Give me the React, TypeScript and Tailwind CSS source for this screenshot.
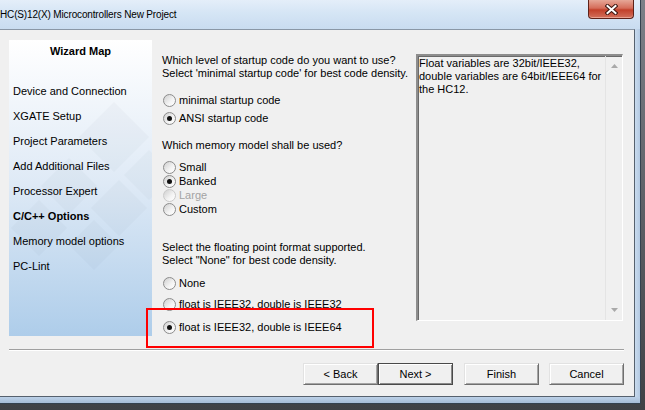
import React from "react"

const sans = "font-['Liberation_Sans',Arial,sans-serif]"

function Radio({ label, checked = false, disabled = false }: { label: string; checked?: boolean; disabled?: boolean }) {
  return (
    <div className={`flex items-center h-[14px] pl-[1px] whitespace-nowrap ${disabled ? "text-[#a3a3a3]" : "text-black"}`}>
      <span
        className={`w-[13px] h-[13px] shrink-0 rounded-full border flex items-center justify-center bg-[linear-gradient(135deg,#cfcfcf,#f4f4f4_60%,#ffffff)] ${
          disabled ? "border-[#cacaca]" : "border-[#8c8c8c]"
        }`}
      >
        {checked && <span className="w-[5px] h-[5px] rounded-full bg-[#111]" />}
      </span>
      <span className="ml-[3px]">{label}</span>
    </div>
  )
}

function Btn({ children, isDefault = false }: { children: React.ReactNode; isDefault?: boolean }) {
  return (
    <div
      className={`w-[75px] h-[22px] flex items-center justify-center bg-[#f0f0f0] text-black ${
        isDefault
          ? "border border-[#4a4a4a] shadow-[inset_1px_1px_0_#ffffff,inset_-1px_-1px_0_#8a8a8a]"
          : "border border-t-[#e2e2e2] border-l-[#e2e2e2] border-r-[#6f6f6f] border-b-[#6f6f6f] shadow-[inset_1px_1px_0_#ffffff,inset_-1px_-1px_0_#a5a5a5]"
      }`}
    >
      {children}
    </div>
  )
}

const mapItems = [
  "Device and Connection",
  "XGATE Setup",
  "Project Parameters",
  "Add Additional Files",
  "Processor Expert",
  "C/C++ Options",
  "Memory model options",
  "PC-Lint",
]

function WizardMap() {
  return (
    <div className="relative w-[143px] h-[296px] overflow-hidden bg-[linear-gradient(to_bottom,#ffffff,#dfeaf6_48%,#aecdea)]">
      {/* faint logo watermark */}
      <svg className="absolute inset-0" width="143" height="296" viewBox="0 0 143 296">
        <g fill="#5d7089" opacity="0.035">
          <path d="M105 62 L140 97 L105 132 L70 97 Z" />
          <path d="M140 110 L165 135 L140 160 L115 135 Z" />
          <path d="M60 118 L88 146 L60 174 L32 146 Z" />
          <path d="M110 140 L138 168 L110 196 L82 168 Z" />
          <path d="M30 160 L58 188 L30 216 L2 188 Z" />
          <path d="M85 180 L110 205 L85 230 L60 205 Z" />
        </g>
      </svg>
      <div className="relative">
        <div className="pt-[5px] h-[45px] text-center font-bold leading-[13px]">Wizard Map</div>
        <div className="pl-[4px]">
          {mapItems.map((it) => (
            <div key={it} className={`h-[25px] leading-[13px] whitespace-nowrap ${it === "C/C++ Options" ? "font-bold" : ""}`}>
              {it}
            </div>
          ))}
        </div>
      </div>
    </div>
  )
}

function Triangle({ up }: { up: boolean }) {
  return (
    <svg width="7" height="4" viewBox="0 0 7 4">
      <path d={up ? "M0 4 L3.5 0 L7 4 Z" : "M0 0 L3.5 4 L7 0 Z"} fill="#a9a9a9" />
    </svg>
  )
}

export default function App() {
  return (
    <div className={`relative w-[645px] h-[410px] overflow-hidden bg-[linear-gradient(to_bottom,#7c8088,#3f4246)] text-[11px] ${sans}`}>
      <div className="w-[641px] h-[404px] flex flex-col bg-[#b7cde6] border-r border-b border-[#34424f]">
        {/* title bar */}
        <div className="h-[29px] flex justify-between bg-[linear-gradient(to_bottom,#e4eef9,#d5e5f5_45%,#c9dcf0)]">
          <div className="h-full flex items-center text-[10px] tracking-[-0.15px] text-black whitespace-nowrap">
            HC(S)12(X) Microcontrollers New Project
          </div>
          <div className="w-[46px] h-[19px] mr-[6px] rounded-b-[4px] border border-t-0 border-[#5e2219] flex items-center justify-center bg-[linear-gradient(to_bottom,#e6a797,#d56d5a_45%,#c2402a_55%,#d2705c)] shadow-[inset_0_-1px_0_#e9a08f]">
            <svg width="13" height="11" viewBox="0 0 13 11">
              <path d="M2.5 2 L10.5 9 M10.5 2 L2.5 9" stroke="#3d1610" strokeWidth="4" strokeLinecap="square" />
              <path d="M2.5 2 L10.5 9 M10.5 2 L2.5 9" stroke="#ffffff" strokeWidth="2" strokeLinecap="square" />
            </svg>
          </div>
        </div>

        <div className="flex">
          {/* client area */}
          <div className="w-[635px] h-[368px] bg-[#f0f0f0] border-t border-r border-b border-t-[#8a97a6] border-r-[#56616e] border-b-[#56616e] pl-[9px] pr-[10px] pt-[10px] text-black">
            <div className="flex h-[296px]">
              <WizardMap />

              <div className="ml-[10px] w-[254px] whitespace-nowrap">
                <div className="mt-[14px] leading-[13px]">
                  Which level of startup code do you want to use?
                  <br />
                  Select 'minimal startup code' for best code density.
                </div>
                <div className="mt-[13px]">
                  <Radio label="minimal startup code" />
                </div>
                <div className="mt-[4px]">
                  <Radio label="ANSI startup code" checked />
                </div>

                <div className="mt-[14px] leading-[13px]">Which memory model shall be used?</div>
                <div className="mt-[8px]">
                  <Radio label="Small" />
                  <Radio label="Banked" checked />
                  <Radio label="Large" disabled />
                  <Radio label="Custom" />
                </div>

                <div className="mt-[25px] leading-[13px]">
                  Select the floating point format supported.
                  <br />
                  Select "None" for best code density.
                </div>
                <div className="mt-[9px]">
                  <Radio label="None" />
                </div>
                <div className="mt-[7px]">
                  <Radio label="float is IEEE32, double is IEEE32" />
                </div>
                <div className="mt-[9px]">
                  <Radio label="float is IEEE32, double is IEEE64" checked />
                </div>
              </div>

              {/* description box */}
              <div className="mt-[14px] w-[207px] h-[267px] flex border-t-2 border-l-2 border-t-[#8d8d8d] border-l-[#8d8d8d] border-r border-b border-r-white border-b-white shadow-[inset_1px_1px_0_#6a6a6a]">
                <div className="flex-1 pl-[1px] pt-[1px] leading-[13px] whitespace-nowrap">
                  Float variables are 32bit/IEEE32,
                  <br />
                  double variables are 64bit/IEEE64 for
                  <br />
                  the HC12.
                </div>
                <div className="w-[17px] border-l border-[#e4e4e4] flex flex-col items-center justify-between pt-[8px] pb-[8px]">
                  <Triangle up />
                  <Triangle up={false} />
                </div>
              </div>
            </div>

            <div className="mt-[13px] border-t border-b border-t-[#a0a0a0] border-b-white" />

            <div className="mt-[12px] flex justify-end">
              <Btn>&lt; Back</Btn>
              <Btn isDefault>Next &gt;</Btn>
              <div className="ml-[11px]">
                <Btn>Finish</Btn>
              </div>
              <div className="ml-[10px]">
                <Btn>Cancel</Btn>
              </div>
            </div>
          </div>
          <div className="flex-1 bg-[linear-gradient(to_right,#c9dbee,#b3c9e2)]" />
        </div>
        <div className="flex-1 bg-[linear-gradient(to_bottom,#bcd1e8,#a6bdd7)]" />
      </div>

      {/* red highlight annotation */}
      <div className="absolute left-[146px] top-[308px] w-[228px] h-[40px] border-2 border-[#ff0000]" />
    </div>
  )
}
